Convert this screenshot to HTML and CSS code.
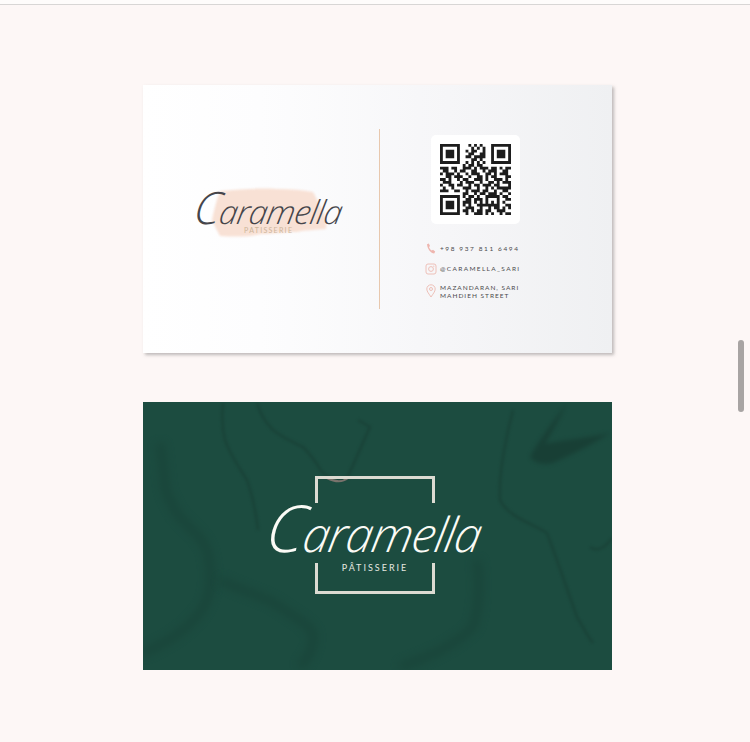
FILE: index.html
```html
<!DOCTYPE html>
<html lang="en">
<head>
<meta charset="utf-8">
<title>Caramella Pâtisserie business card</title>
<link rel="stylesheet" href="styles.css">
</head>
<body>
<div class="scrollbar"></div>
<main class="page">
  <section class="card card-front">
    <div class="front-logo">
      <div class="logo-mark">
        <svg class="brush" viewBox="0 0 116 54" aria-hidden="true">
          <path d="M9 6 C30 4 50 3 66 4 C80 4 92 5 102 7 C105 12 107 17 109 21 C114 28 116 38 115 44 C104 45 94 45 86 47 C72 47 62 49 50 49 C38 52 24 52 9 51 C6 45 3 40 1 35 C3 25 6 14 9 6Z"/>
        </svg>
        <div class="logo-name small-name"><span class="cap">C</span>aramella</div>
        <div class="logo-sub">PATISSERIE</div>
      </div>
    </div>
    <div class="divider"></div>
    <div class="front-info">
      <div class="qr-box">
        <svg class="qr" viewBox="0 0 25 25" aria-label="QR code" role="img">
          <path class="finder" d="M0 0h7v7H0zM1 1v5h5V1zM2 2h3v3H2zM18 0h7v7h-7zM19 1v5h5V1zM20 2h3v3h-3zM0 18h7v7H0zM1 19v5h5v-5zM2 20h3v3H2z"/>
          <path class="modules" d="M10 .5h1M12 .5h1M14 .5h1M11 1.500h1M13 1.500h1M15 1.500h1M9 2.500h1M11 2.500h2M15 2.500h1M10 3.500h2M14 3.500h2M9 4.500h2M12 4.500h4M11 5.500h2M14 5.500h1M9 6.500h1M11 6.500h1M13 6.500h1M15 6.500h1M8 7.500h1M10 7.500h2M13 7.500h2M0 8.500h3M4 8.500h2M8 8.500h3M12 8.500h1M14 8.500h3M18 8.500h2M21 8.500h1M23 8.500h2M1 9.500h2M5 9.500h1M7 9.500h2M11 9.500h2M15 9.500h1M17 9.500h3M22 9.500h2M0 10.500h1M2 10.500h3M6 10.500h1M9 10.500h1M11 10.500h3M16 10.500h2M19 10.500h1M21 10.500h3M2 11.500h2M5 11.500h3M10 11.500h1M13 11.500h2M16 11.500h1M18 11.500h2M23 11.500h2M0 12.500h2M3 12.500h1M6 12.500h1M8 12.500h2M12 12.500h3M16 12.500h1M19 12.500h3M23 12.500h1M1 13.500h3M7 13.500h1M9 13.500h3M14 13.500h1M17 13.500h2M20 13.500h1M22 13.500h3M0 14.500h1M3 14.500h2M6 14.500h2M10 14.500h1M12 14.500h2M15 14.500h3M19 14.500h2M24 14.500h1M1 15.500h1M4 15.500h1M8 15.500h3M13 15.500h1M16 15.500h1M18 15.500h1M20 15.500h3M23 15.500h2M0 16.500h3M5 16.500h2M9 16.500h1M11 16.500h3M15 16.500h2M19 16.500h1M22 16.500h2M8 17.500h2M12 17.500h1M14 17.500h2M17 17.500h3M21 17.500h1M24 17.500h1M8 18.500h1M10 18.500h2M13 18.500h1M16 18.500h5M22 18.500h2M9 19.500h2M12 19.500h3M16 19.500h1M20 19.500h1M23 19.500h2M8 20.500h3M12 20.500h1M14 20.500h1M16 20.500h1M18 20.500h1M20 20.500h1M22 20.500h1M8 21.500h1M10 21.500h1M13 21.500h3M16 21.500h5M23 21.500h2M9 22.500h3M14 22.500h1M17 22.500h1M19 22.500h2M22 22.500h1M24 22.500h1M8 23.500h2M11 23.500h1M13 23.500h2M16 23.500h2M20 23.500h3M9 24.500h1M12 24.500h3M16 24.500h1M18 24.500h1M21 24.500h1M23 24.500h2"/>
        </svg>
      </div>
      <ul class="contacts">
        <li class="contact contact-phone">
          <svg class="icon" viewBox="0 0 12 12" aria-hidden="true"><path class="icon-solid" d="M2 1.200 L3.800 .6 L5 3 L4 4 C4.400 5.400 5.400 6.800 6.800 7.600 L8 6.800 L10.200 8.600 L9.200 10.400 C6 10.400 2.400 6 2 1.200Z"/></svg>
          <span>+98 937 811 6494</span>
        </li>
        <li class="contact contact-insta">
          <svg class="icon" viewBox="0 0 12 12" aria-hidden="true"><rect class="icon-line" x="1" y="1" width="10" height="10" rx="2"/><circle class="icon-line" cx="6" cy="6" r="2.400"/><circle class="icon-dot" cx="8.800" cy="3.200" r=".6"/></svg>
          <span>@CARAMELLA_SARI</span>
        </li>
        <li class="contact contact-addr">
          <svg class="icon icon-pin" viewBox="0 0 12 14" aria-hidden="true"><path class="icon-line" d="M6 13 C4 9.800 1.800 7.600 1.800 5 A4.200 4.200 0 0 1 10.200 5 C10.200 7.600 8 9.800 6 13Z"/><circle class="icon-line" cx="6" cy="5" r="1.500"/></svg>
          <span>MAZANDARAN, SARI<br>MAHDIEH STREET</span>
        </li>
      </ul>
    </div>
  </section>

  <section class="card card-back">
    <svg class="marble" viewBox="0 0 469 268" aria-hidden="true">
      <g class="veins-soft">
        <path d="M17 41 C22 70 20 90 27 98 C34 120 58 130 64 148 C70 170 68 185 64 198 C55 220 30 238 0 251"/>
        <path d="M77 178 C100 190 125 195 137 205 C152 215 165 222 170 231 C172 245 165 255 157 265"/>
        <path d="M334 158 C338 185 335 210 330 225 C310 245 285 255 257 265"/>
      </g>
      <g class="veins">
        <path d="M80 1 C78 20 80 30 82 38 C88 55 98 68 104 78 C110 95 113 110 115 128"/>
        <path d="M114 1 C118 15 124 22 130 28 C140 36 150 40 160 45 C170 55 174 62 179 70 C188 78 198 78 204 76 C212 60 220 40 227 25 L215 18"/>
        <path d="M370 8 C362 40 355 75 357 98 C365 115 390 122 404 131 C415 160 425 190 434 215 C440 225 445 235 450 241"/>
        <path d="M447 145 C452 149 460 149 469 136"/>
      </g>
      <path class="vein-thick" d="M424 1 C410 20 396 38 387 55 C392 62 402 63 410 61 C430 52 450 42 467 31 C445 36 420 38 402 42 C410 28 418 14 424 1Z"/>
      <path class="vein-pink" d="M184 76 C192 80 200 80 205 76"/>
    </svg>
    <div class="back-logo">
      <div class="bracket bracket-top"></div>
      <div class="logo-name big-name"><span class="cap">C</span>aramella</div>
      <div class="bracket bracket-bottom"><span class="back-sub">PÂTISSERIE</span></div>
    </div>
  </section>
</main>
</body>
</html>
```
FILE: styles.css
```css
* { box-sizing: border-box; }
html, body { margin: 0; padding: 0; height: 100%; overflow: hidden; }
body {
  background: #fdf7f6;
  font-family: "Lato", "Liberation Sans", sans-serif;
  position: relative;
}
body::before {
  content: "";
  display: block;
  height: 4px;
  background: #fefcfb;
}
.page {
  height: 738px;
  border-top: 1px solid #d8d6d5;
  padding: 80px 0 0 143px;
  display: flex;
  flex-direction: column;
  gap: 49px;
}
.scrollbar {
  position: absolute;
  top: 340px;
  left: 738px;
  width: 6px;
  height: 72px;
  border-radius: 3px;
  background: #a8a4a3;
}
.card {
  width: 469px;
  height: 268px;
  flex: none;
  position: relative;
  display: flex;
}
.card-front {
  background: linear-gradient(90deg, #ffffff 0%, #fdfdfe 25%, #f6f6f8 65%, #eff0f2 100%);
  box-shadow: 2px 2px 3px rgba(130, 125, 125, .5);
}
.front-logo {
  width: 236px;
  padding: 101px 0 0 52px;
  flex: none;
}
.logo-mark { position: relative; width: 150px; height: 60px; }
.brush {
  position: absolute;
  left: 16px;
  top: 1px;
  width: 116px;
  height: 54px;
  filter: blur(1px);
}
.brush path { fill: #f8e1d5; }
.logo-name {
  position: relative;
  font-family: "Open Sans", "Liberation Serif", serif;
  font-style: italic;
  font-weight: 300;
  white-space: nowrap;
  transform: skewX(-10deg);
}
.logo-name .cap { font-size: 1.35em; }
.small-name {
  height: 46px;
  font-size: 33px;
  line-height: 46px;
  color: #45454a;
  letter-spacing: -.6px;
  margin-top: -2px;
}
.logo-sub {
  position: absolute;
  left: 49px;
  top: 42px;
  font-size: 7px;
  letter-spacing: 1.3px;
  color: #cdb59a;
  line-height: 9px;
}
.divider {
  width: 1px;
  height: 180px;
  margin-top: 44px;
  background: #e8c8ae;
  flex: none;
}
.front-info {
  padding: 50px 0 0 45px;
  display: flex;
  flex-direction: column;
}
.qr-box {
  width: 89px;
  height: 89px;
  margin-left: 6px;
  background: #fff;
  border-radius: 5px;
  display: flex;
  align-items: center;
  justify-content: center;
}
.qr { width: 71px; height: 71px; filter: blur(.35px); }
.finder { fill: #1d1d1d; fill-rule: evenodd; }
.modules { fill: none; stroke: #1d1d1d; stroke-width: 1; }
.contacts {
  list-style: none;
  margin: 19px 0 0;
  padding: 0;
  display: flex;
  flex-direction: column;
  gap: 8px;
}
.contact {
  display: flex;
  align-items: center;
  gap: 3px;
  font-size: 6.500px;
  line-height: 8px;
  letter-spacing: 1.350px;
  color: #4b4a4d;
  white-space: nowrap;
}
.contact-addr { align-items: flex-start; margin-top: 1px; }
.contact-addr span { letter-spacing: 1px; }
.contact-phone span { letter-spacing: 1.600px; }
.icon { width: 12px; height: 12px; flex: none; }
.icon-pin { width: 12px; height: 14px; }
.icon-solid { fill: #eeb5ae; }
.icon-line { fill: none; stroke: #eec0b8; stroke-width: 1; }
.icon-dot { fill: #eec0b8; }
.card-back {
  background: #1c4c40;
  justify-content: center;
  overflow: hidden;
}
.marble {
  position: absolute;
  inset: 0;
  width: 100%;
  height: 100%;
}
.veins-soft path {
  fill: none;
  stroke: #173e34;
  stroke-width: 8;
  opacity: .5;
  filter: blur(4px);
}
.veins path {
  fill: none;
  stroke: #17382f;
  stroke-width: 2;
  opacity: .6;
  filter: blur(1.500px);
}
.vein-thick { fill: #173a31; opacity: .7; filter: blur(2px); }
.vein-pink { fill: none; stroke: #b98f8c; stroke-width: 2; opacity: .6; filter: blur(.6px); }
.back-logo {
  position: relative;
  width: 120px;
  margin: 74px 0 0 -5px;
  display: flex;
  flex-direction: column;
  align-items: center;
}
.bracket {
  width: 120px;
  border: 3px solid #dcdbd2;
  flex: none;
}
.bracket-top { height: 27px; border-bottom: 0; }
.bracket-bottom {
  height: 31px;
  border-top: 0;
  display: flex;
  justify-content: center;
}
.big-name {
  color: #fbfbf6;
  height: 60px;
  font-size: 48px;
  line-height: 60px;
  letter-spacing: -.9px;
  display: flex;
  justify-content: center;
  align-items: baseline;
  width: 120px;
  margin-top: -6px;
  margin-bottom: 6px;
}
.back-sub {
  font-size: 9px;
  letter-spacing: 2px;
  line-height: 12px;
  margin-top: -1px;
  color: #e6e8e0;
}
```
